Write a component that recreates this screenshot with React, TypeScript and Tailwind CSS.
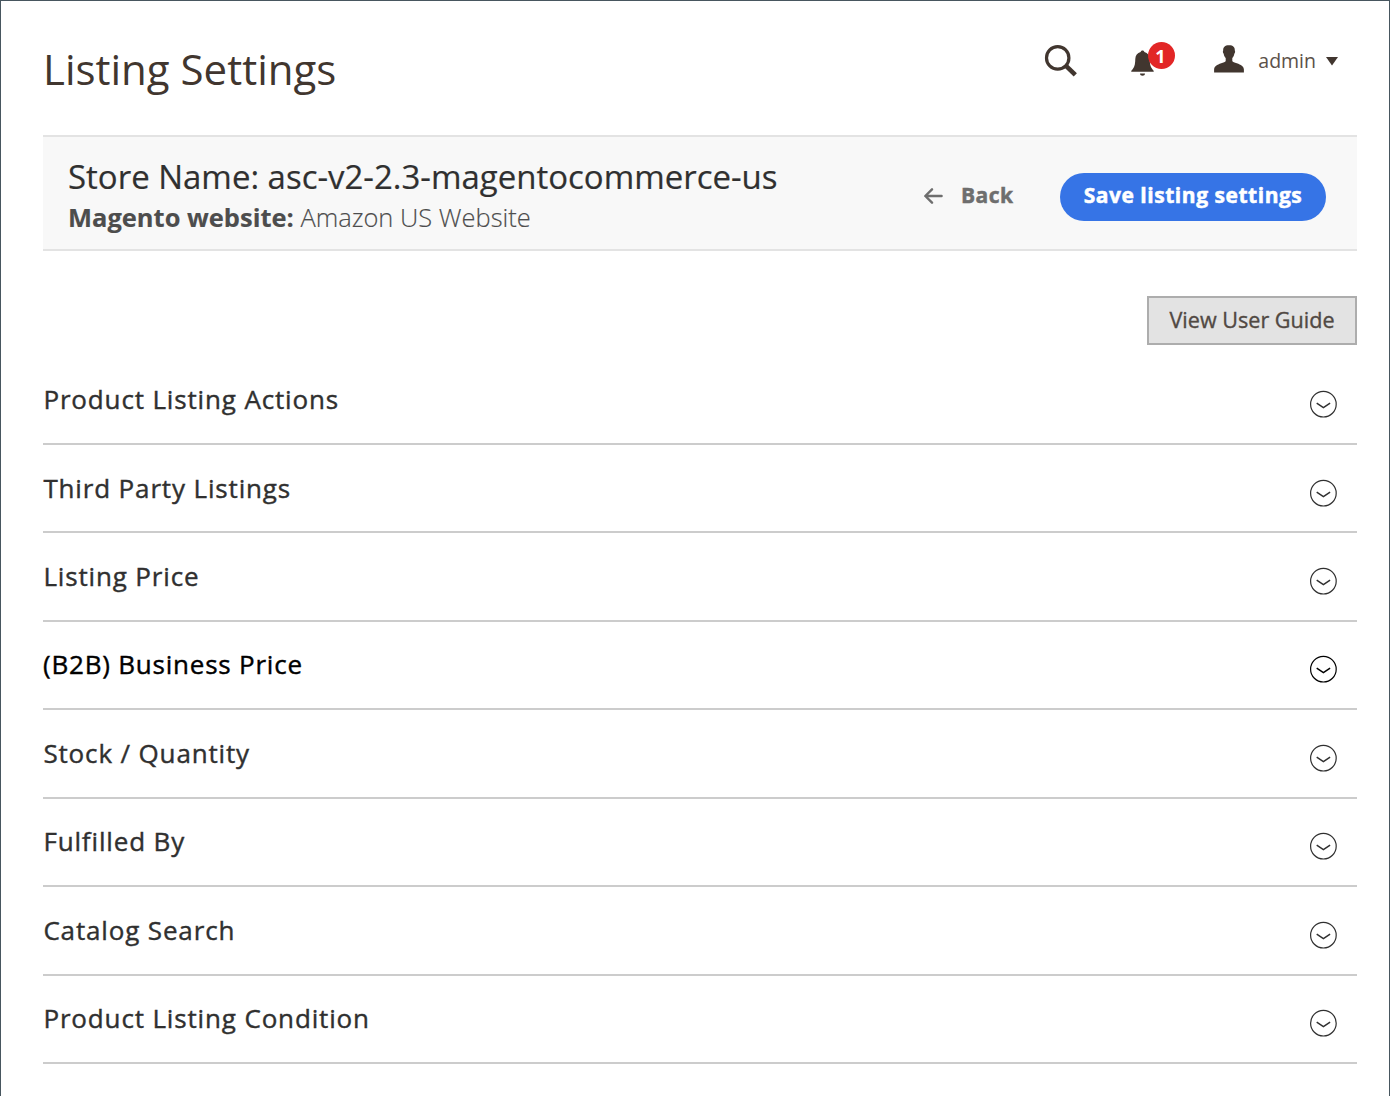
import React from "react";

const sections = [
  { title: "Product Listing Actions" },
  { title: "Third Party Listings" },
  { title: "Listing Price" },
  { title: "(B2B) Business Price", active: true },
  { title: "Stock / Quantity" },
  { title: "Fulfilled By" },
  { title: "Catalog Search" },
  { title: "Product Listing Condition" },
];

function SearchIcon() {
  return (
    <svg width="34" height="34" viewBox="0 0 34 34" fill="none" stroke="#41362f">
      <circle cx="13.7" cy="13.9" r="11.2" strokeWidth="3.2" />
      <path d="M22 21.8 31.3 30.8" strokeWidth="4.6" />
    </svg>
  );
}

function BellIcon() {
  return (
    <svg width="24" height="28" viewBox="0 0 24 28" fill="#41362f">
      <path d="M11.5 0.4c1 0 1.7.6 1.9 1.5 3.3.8 5.2 3.5 5.3 7 .1 4.5.5 7.5 2.5 10.2.8 1 1.6 1.7 1.6 2.7H.2c0-1 .8-1.7 1.6-2.7 2-2.7 2.4-5.7 2.5-10.2.1-3.5 2-6.2 5.3-7C9.8 1 10.5.4 11.5.4Z" />
      <path d="M9 23.5h5c0 1.3-1.1 2.3-2.5 2.3S9 24.8 9 23.5Z" />
    </svg>
  );
}

function UserIcon() {
  return (
    <svg width="30" height="28" viewBox="0 0 30 28" fill="#41362f">
      <path d="M15 .2c4.2 0 6 2 5.8 5.3.5.3.4 2.3-.5 3.3-.3 2-1 3.3-2 4.3v2.8c.4 1.1 2.3 1.5 4.5 2.3 4.2 1.5 6.9 2.8 7.1 6.3V27.5H.1V24.500c.2-3.500 2.900-4.800 7.100-6.300 2.200-.8 4.100-1.200 4.500-2.300v-2.800c-1-1-1.700-2.300-2-4.300-.9-1-1-3-.5-3.300C9 2.200 10.800.2 15 .2Z" />
    </svg>
  );
}

function ChevronCircle() {
  return (
    <svg width="29" height="29" viewBox="0 0 29 29" fill="none" stroke="currentColor">
      <circle cx="14.4" cy="14.2" r="12.8" strokeWidth="1.2" />
      <path d="M7.7 13.2 14.4 17.7 21.1 13.2" strokeWidth="1.5" />
    </svg>
  );
}

export default function App() {
  return (
    <div className="h-[1096px] w-[1390px] overflow-hidden border-x border-t border-[#47565f] bg-white pl-[42px] pr-8 font-['Open_Sans',sans-serif]">
      <header className="flex h-[134px] items-start justify-between">
        <h1 className="mt-[38px] whitespace-nowrap text-[42px] leading-[60px] text-[#41362f]">
          Listing Settings
        </h1>
        <div className="mr-[19px] flex pt-[42px]">
          <button className="mt-[1px] h-[34px]" aria-label="Search">
            <SearchIcon />
          </button>
          <button className="relative ml-[53px] mt-[7px] h-7 w-6" aria-label="Notifications">
            <BellIcon />
            <span className="absolute -top-[8px] left-[16.5px] flex h-[27px] w-[27px] items-center justify-center rounded-full bg-[#e22626] pr-px text-[18px] font-bold leading-none text-white">
              1
            </span>
          </button>
          <button className="ml-[59px] flex items-start text-[#41362f]">
            <span className="mt-[2px]">
              <UserIcon />
            </span>
            <span className="ml-[14.3px] mt-[4px] text-[19.5px] leading-7 text-[#5b5149]">admin</span>
            <svg className="ml-[10px] mt-[14px]" width="12" height="9" viewBox="0 0 12 9" fill="#41362f">
              <path d="M0 0h12L6 8.5Z" />
            </svg>
          </button>
        </div>
      </header>

      <div className="flex h-[116px] justify-between border-y-2 border-[#e3e3e3] bg-[#f8f8f8] pl-[25px] pr-[31px]">
        <div className="whitespace-nowrap pt-[16px]">
          <div className="text-[32.98px] leading-[48px] text-[#303030] [-webkit-text-stroke:0.2px]">
            Store Name: asc-v2-2.3-magentocommerce-us
          </div>
          <div className="-mt-px text-[25.47px] font-light leading-[34px] text-[#4d4d4d] [-webkit-text-stroke:0.15px]">
            <span className="font-bold">Magento website:</span> Amazon US Website
          </div>
        </div>
        <div className="flex pt-[36px]">
          <button className="flex h-12 items-center text-[#6e6e6e]">
            <svg className="-mt-[3px]" width="19" height="16" viewBox="0 0 19 16" fill="none" stroke="currentColor" strokeWidth="2.4" strokeLinecap="round" strokeLinejoin="round">
              <path d="M17.6 8H1.5M8 1.3 1.3 8 8 14.7" />
            </svg>
            <span className="-mt-[3px] ml-[18px] text-[21px] font-bold tracking-[0.5px] [-webkit-text-stroke:0.5px]">
              Back
            </span>
          </button>
          <button className="ml-[46.5px] h-12 w-[266px] whitespace-nowrap rounded-full bg-[#3674e6] pb-[3px] text-[21px] font-bold tracking-[0.53px] text-white [-webkit-text-stroke:0.5px]">
            Save listing settings
          </button>
        </div>
      </div>

      <div className="mt-[45px] flex justify-end">
        <button className="h-[49px] w-[210px] whitespace-nowrap border-2 border-[#adadad] bg-[#e3e3e3] text-[21.6px] font-medium text-[#514943] [-webkit-text-stroke:0.35px]">
          View User Guide
        </button>
      </div>

      <div className="mt-[11.5px]">
        {sections.map((s) => (
          <div
            key={s.title}
            className={`flex h-[88.44px] items-start justify-between border-b-2 border-[#cccccc] pr-[19px] ${
              s.active ? "text-black" : "text-[#303030]"
            }`}
          >
            <h2
              className={`mt-[24.65px] whitespace-nowrap text-[26px] font-medium leading-[36px] [-webkit-text-stroke:0.4px] ${
                s.active ? "tracking-[0.78px]" : "pl-[0.4px] tracking-[0.85px]"
              }`}
            >
              {s.title}
            </h2>
            <span className="mt-[33.65px]">
              <ChevronCircle />
            </span>
          </div>
        ))}
      </div>
    </div>
  );
}
